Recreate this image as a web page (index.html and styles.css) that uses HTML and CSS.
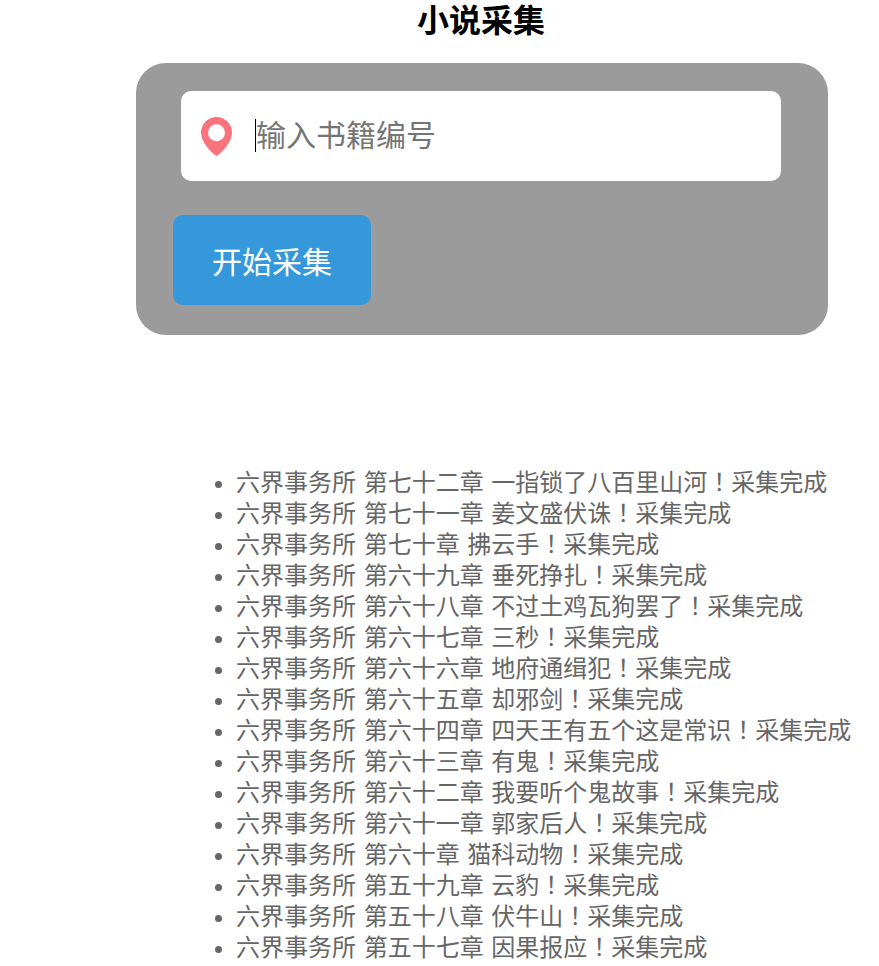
FILE: index.html
```html
<!DOCTYPE html>
<html lang="zh-CN">
<head>
    <meta charset="UTF-8">
    <meta name="viewport" content="width=device-width, initial-scale=1.0">
    <title>小说采集</title>
    <link rel="stylesheet" href="styles.css">
</head>
<body>
    <div class="wrap">
        <h2 class="title">小说采集</h2>
        <div class="panel">
            <div class="input-box">
                <svg class="pin" width="31" height="39" viewBox="0 0 31 39">
                    <path d="M15.500 0C24 0 31 7 31 15.500C31 25 21 35.500 15.500 39C10 35.500 0 25 0 15.500C0 7 7 0 15.500 0Z" fill="#f9727c"/>
                    <circle cx="15.500" cy="15.700" r="8.500" fill="#fff"/>
                </svg>
                <div class="field">
                    <span class="caret"></span>
                    <input type="text" class="code-input" placeholder="输入书籍编号">
                </div>
            </div>
            <button class="start-btn">开始采集</button>
        </div>
    </div>
    <ul class="log">
        <li>六界事务所 第七十二章 一指锁了八百里山河<span class="bang" lang="zh-TW">！</span>采集完成</li>
        <li>六界事务所 第七十一章 姜文盛伏诛<span class="bang" lang="zh-TW">！</span>采集完成</li>
        <li>六界事务所 第七十章 拂云手<span class="bang" lang="zh-TW">！</span>采集完成</li>
        <li>六界事务所 第六十九章 垂死挣扎<span class="bang" lang="zh-TW">！</span>采集完成</li>
        <li>六界事务所 第六十八章 不过土鸡瓦狗罢了<span class="bang" lang="zh-TW">！</span>采集完成</li>
        <li>六界事务所 第六十七章 三秒<span class="bang" lang="zh-TW">！</span>采集完成</li>
        <li>六界事务所 第六十六章 地府通缉犯<span class="bang" lang="zh-TW">！</span>采集完成</li>
        <li>六界事务所 第六十五章 却邪剑<span class="bang" lang="zh-TW">！</span>采集完成</li>
        <li>六界事务所 第六十四章 四天王有五个这是常识<span class="bang" lang="zh-TW">！</span>采集完成</li>
        <li>六界事务所 第六十三章 有鬼<span class="bang" lang="zh-TW">！</span>采集完成</li>
        <li>六界事务所 第六十二章 我要听个鬼故事<span class="bang" lang="zh-TW">！</span>采集完成</li>
        <li>六界事务所 第六十一章 郭家后人<span class="bang" lang="zh-TW">！</span>采集完成</li>
        <li>六界事务所 第六十章 猫科动物<span class="bang" lang="zh-TW">！</span>采集完成</li>
        <li>六界事务所 第五十九章 云豹<span class="bang" lang="zh-TW">！</span>采集完成</li>
        <li>六界事务所 第五十八章 伏牛山<span class="bang" lang="zh-TW">！</span>采集完成</li>
        <li>六界事务所 第五十七章 因果报应<span class="bang" lang="zh-TW">！</span>采集完成</li>
        <li>六界事务所 第五十六章 采集完成</li>
    </ul>
</body>
</html>
```
FILE: styles.css
```css
html, body {
    height: 100%;
    overflow: hidden;
}
body {
    margin: 0;
    padding: 0;
    background: #ffffff;
    font-family: "Liberation Sans", "Noto Sans CJK SC", sans-serif;
}
.wrap {
    width: 692px;
    margin-left: 136px;
}
.title {
    margin: 0;
    height: 63px;
    padding: 3px 2px 0 0;
    box-sizing: border-box;
    font-size: 32px;
    line-height: 36px;
    font-weight: bold;
    text-align: center;
    color: #000000;
}
.panel {
    height: 272px;
    box-sizing: border-box;
    padding: 28px 37px 30px;
    background: #9b9b9b;
    border-radius: 30px;
}
.input-box {
    display: flex;
    align-items: center;
    width: 600px;
    height: 90px;
    margin-left: 8px;
    margin-bottom: 34px;
    padding-left: 20px;
    box-sizing: border-box;
    background: #ffffff;
    border-radius: 10px;
}
.pin {
    flex: none;
    margin-top: 1px;
}
.field {
    position: relative;
    flex: 1;
    margin-left: 23px;
}
.caret {
    position: absolute;
    left: 0;
    top: 12px;
    width: 1px;
    height: 33px;
    background: #000000;
}
.code-input {
    display: block;
    width: 100%;
    height: 58px;
    padding: 0 0 0 1px;
    border: none;
    outline: none;
    box-sizing: border-box;
    background: transparent;
    font-family: inherit;
    font-size: 30px;
}
.code-input::placeholder {
    color: #757575;
}
.start-btn {
    display: block;
    width: 198px;
    height: 90px;
    padding: 0;
    border: none;
    border-radius: 10px;
    background: #3498db;
    color: #ffffff;
    font-family: inherit;
    font-size: 30px;
}
.log {
    margin: 132px 0 0;
    padding: 0 0 0 236px;
    font-size: 24px;
    line-height: 31px;
    word-spacing: 1px;
    color: #666666;
    white-space: nowrap;
}
.bang {
    font-family: "Noto Sans CJK TC", sans-serif;
    line-height: 0;
}
```
